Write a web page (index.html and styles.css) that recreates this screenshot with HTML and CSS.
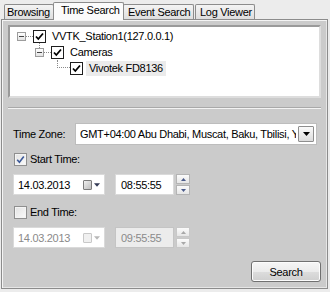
FILE: index.html
```html
<!DOCTYPE html>
<html>
<head>
<meta charset="utf-8">
<link rel="stylesheet" href="styles.css">
</head>
<body>
<div class="window">
  <div class="tabs">
    <div class="tab t1">Browsing</div>
    <div class="tab active">Time Search</div>
    <div class="tab t3">Event Search</div>
    <div class="tab t4">Log Viewer</div>
  </div>
  <div class="panel">
    <div class="tree">
      <div class="node lvl0">
        <span class="exp"></span><span class="hline"></span>
        <span class="cb dark down"><svg viewBox="0 0 11 11"><path d="M2 5.5 L4.3 8 L9 2.5" fill="none" stroke="#000" stroke-width="1.8"/></svg></span>
        <span class="lbl">VVTK_Station1(127.0.0.1)</span>
      </div>
      <div class="node lvl1">
        <span class="exp"></span><span class="hline"></span>
        <span class="cb dark"><svg viewBox="0 0 11 11"><path d="M2 5.5 L4.3 8 L9 2.5" fill="none" stroke="#000" stroke-width="1.8"/></svg></span>
        <span class="lbl">Cameras</span>
      </div>
      <div class="node lvl2">
        <span class="elbow"></span>
        <span class="cb dark"><svg viewBox="0 0 11 11"><path d="M2 5.5 L4.3 8 L9 2.5" fill="none" stroke="#000" stroke-width="1.8"/></svg></span>
        <span class="lbl sel">Vivotek FD8136</span>
      </div>
    </div>
    <div class="sep"></div>
    <div class="tzrow">
      <span class="tzlabel">Time Zone:</span>
      <div class="select">
        <span class="seltext">GMT+04:00 Abu Dhabi, Muscat, Baku, Tbilisi, Yerevan</span>
        <span class="ddbtn"><svg viewBox="0 0 7 4"><path d="M0 0 H7 L3.5 4 Z" fill="#000"/></svg></span>
      </div>
    </div>
    <div class="checkrow">
      <span class="cb vista"><svg viewBox="0 0 11 11"><path d="M2.2 5.8 L4.4 8.3 L8.8 2.4" fill="none" stroke="#3d5a99" stroke-width="1.6"/></svg></span>
      <span>Start Time:</span>
    </div>
    <div class="dtrow">
      <div class="datebox"><span class="val">14.03.2013</span><span class="cal"></span><span class="arr"><svg viewBox="0 0 7 4"><path d="M0 0 H7 L3.5 4 Z" fill="#333a55"/></svg></span></div>
      <div class="timebox"><span class="val">08:55:55</span></div>
      <div class="spin">
        <span class="sb"><svg viewBox="0 0 5 3"><path d="M0 3 H5 L2.5 0 Z" fill="#4b5b8a"/></svg></span>
        <span class="sb"><svg viewBox="0 0 5 3"><path d="M0 0 H5 L2.5 3 Z" fill="#4b5b8a"/></svg></span>
      </div>
    </div>
    <div class="checkrow end">
      <span class="cb vista"></span>
      <span>End Time:</span>
    </div>
    <div class="dtrow disabled">
      <div class="datebox"><span class="val">14.03.2013</span><span class="cal"></span><span class="arr"><svg viewBox="0 0 7 4"><path d="M0 0 H7 L3.5 4 Z" fill="#b8b8b8"/></svg></span></div>
      <div class="timebox"><span class="val">09:55:55</span></div>
      <div class="spin">
        <span class="sb"><svg viewBox="0 0 5 3"><path d="M0 3 H5 L2.5 0 Z" fill="#a8a8a8"/></svg></span>
        <span class="sb"><svg viewBox="0 0 5 3"><path d="M0 0 H5 L2.5 3 Z" fill="#a8a8a8"/></svg></span>
      </div>
    </div>
    <div class="btnrow">
      <button class="btn">Search</button>
    </div>
  </div>
</div>
</body>
</html>
```

FILE: styles.css
```css
* { box-sizing: border-box; }
html, body {
  margin: 0;
  padding: 0;
  width: 330px;
  height: 292px;
  overflow: hidden;
  background: #ececec;
  font-family: "Liberation Sans", Arial, sans-serif;
  font-size: 11px;
  letter-spacing: -0.3px;
  color: #000;
}
.window {
  padding: 2px 2px 0 1px;
}
.tabs {
  display: flex;
  align-items: flex-end;
  height: 17px;
  padding-left: 3px;
  position: relative;
  z-index: 2;
}
.tab {
  height: 15px;
  padding: 0 0 0 4px;
  line-height: 14px;
  border: 1px solid #8c8c8c;
  border-bottom: none;
  border-radius: 2px 2px 0 0;
  background: linear-gradient(#f4f4f4, #dedede);
  white-space: nowrap;
  overflow: hidden;
}
.t1 { width: 50px; padding-left: 2px; }
.t3 { width: 71px; margin-left: 0; }
.t4 { width: 60px; margin-left: 1px; }
.tab.active {
  height: 18px;
  width: 71px;
  margin: 0 -1px -1px -1px;
  padding-left: 7px;
  background: #fbfbfb;
  line-height: 15px;
  position: relative;
  z-index: 3;
}
.panel {
  height: 270px;
  border: 1px solid #8c8c8c;
  background: #cbcbcb;
  box-shadow: inset 1px 1px 0 #f4f4f4, inset -1px -1px 0 #e6e6e6;
  padding: 5px 6px 0 6px;
}
.tree {
  height: 73px;
  background: #fff;
  border: 2px solid;
  border-color: #9a9a9a #dddddd #dddddd #9a9a9a;
  padding-top: 1px;
}
.node {
  display: flex;
  align-items: center;
  height: 16px;
}
.lvl0 { padding-left: 7px; }
.lvl1 { padding-left: 25px; }
.lvl2 { padding-left: 47px; }
.exp {
  width: 9px;
  height: 9px;
  border: 1px solid #9c9c9c;
  background: linear-gradient(#ffffff, #e2e2e2);
  position: relative;
  flex: none;
}
.exp::after {
  content: "";
  position: absolute;
  left: 1px;
  top: 3px;
  width: 5px;
  height: 1px;
  background: #444;
}
.hline {
  width: 7px;
  border-top: 1px dotted #8a8a8a;
  flex: none;
}
.elbow {
  align-self: flex-start;
  width: 13px;
  height: 8px;
  border-left: 1px dotted #8a8a8a;
  border-bottom: 1px dotted #8a8a8a;
  flex: none;
}
.cb {
  width: 13px;
  height: 13px;
  flex: none;
  position: relative;
  display: inline-flex;
  align-items: center;
  justify-content: center;
}
.cb svg { width: 11px; height: 11px; }
.cb.dark {
  border: 1px solid #1e1e1e;
  background: #fff;
}
.cb.down::after {
  content: "";
  position: absolute;
  left: 5px;
  top: 12px;
  height: 5px;
  border-left: 1px dotted #8a8a8a;
}
.lbl {
  margin-left: 6px;
  white-space: nowrap;
  line-height: 15px;
}
.lbl.sel {
  margin-left: 3px;
  padding: 0 3px;
  background: #ebebeb;
}
.sep {
  margin: 9px 0 0 0;
  height: 2px;
  border-top: 1px solid #a9a9a9;
  border-bottom: 1px solid #f3f3f3;
}
.tzrow {
  display: flex;
  align-items: center;
  margin-top: 14px;
  padding-left: 5px;
}
.tzlabel { width: 62px; }
.select {
  display: flex;
  align-items: center;
  width: 242px;
  height: 22px;
  background: #fff;
  border: 1px solid #bdbdbd;
  padding: 1px 2px 1px 4px;
}
.seltext {
  flex: 1;
  overflow: hidden;
  white-space: nowrap;
}
.ddbtn {
  width: 16px;
  height: 16px;
  margin-left: 2px;
  border: 1px solid #8e8e8e;
  border-radius: 1px;
  background: linear-gradient(#fafafa, #dcdcdc);
  display: flex;
  align-items: center;
  justify-content: center;
}
.ddbtn svg { width: 7px; height: 4px; }
.checkrow {
  display: flex;
  align-items: center;
  gap: 3px;
  margin-top: 7px;
  padding-left: 6px;
  height: 14px;
}
.checkrow.end { margin-top: 10px; }
.cb.vista {
  border: 1px solid #8f8f8f;
  background: linear-gradient(135deg, #e2e2e2, #fbfbfb);
  box-shadow: inset 0 0 0 1px #f4f4f4;
}
.dtrow {
  display: flex;
  align-items: center;
  margin-top: 8px;
  padding-left: 5px;
  height: 21px;
}
.datebox, .timebox {
  height: 21px;
  background: #fff;
  border: 1px solid #dadada;
  display: flex;
  align-items: center;
  padding-left: 4px;
}
.datebox { width: 92px; }
.timebox { width: 59px; margin-left: 10px; padding-left: 5px; }
.datebox .val { width: 65px; }
.cal {
  width: 9px;
  height: 10px;
  border: 1px solid #7c7c7c;
  background: linear-gradient(135deg, #f0f0f0, #bdbdbd);
  border-radius: 1px;
}
.arr { margin-left: 2px; display: flex; }
.arr svg { width: 6px; height: 4px; }
.spin {
  margin-left: 2px;
  width: 14px;
  height: 21px;
  display: flex;
  flex-direction: column;
  gap: 1px;
}
.sb {
  flex: 1;
  border: 1px solid #b4b4b4;
  background: linear-gradient(#fbfbfb, #e6e6e6);
  display: flex;
  align-items: center;
  justify-content: center;
}
.sb svg { width: 5px; height: 3px; }
.disabled .val { color: #8a8a8a; }
.disabled .timebox { background: #ececec; border-color: #c4c4c4; }
.disabled .cal { border-color: #c8c8c8; background: #f0f0f0; }
.disabled .sb { border-color: #c8c8c8; }
.btnrow {
  display: flex;
  justify-content: flex-end;
  margin-top: 13px;
}
.btn {
  width: 70px;
  height: 21px;
  font-family: "Liberation Sans", Arial, sans-serif;
  font-size: 11px;
  letter-spacing: -0.3px;
  color: #000;
  border: 1px solid #707070;
  border-radius: 3px;
  background: linear-gradient(#f6f6f6 0%, #ebebeb 50%, #dddddd 51%, #cfcfcf 100%);
  box-shadow: inset 0 0 0 1px #fcfcfc;
  padding: 0;
}
```
